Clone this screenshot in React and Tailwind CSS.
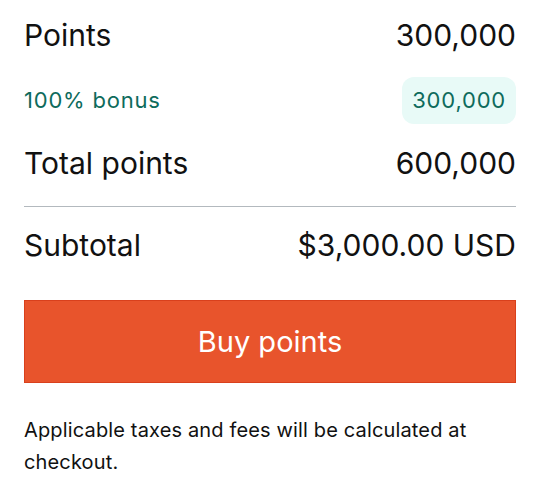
import React from 'react';

const Row = ({ label, value, className = '' }) => (
    <div className={`flex items-center justify-between h-12 text-[30px] text-[#111111] ${className}`}>
        <span>{label}</span>
        <span>{value}</span>
    </div>
);

const App = () => {
    return (
        <div className="min-h-screen bg-white px-6 pt-[11px] w-[540px]" style={{ fontFamily: 'Inter, "Noto Sans", sans-serif' }}>
            <Row label="Points" value="300,000" />

            <div className="mt-[18px] flex items-center justify-between h-[47px] text-[22px] tracking-[0.8px] text-[#0e6b5c]">
                <span>100% bonus</span>
                <span className="h-full flex items-center px-[10px] rounded-xl bg-[#e8faf7]">300,000</span>
            </div>

            <Row label="Total points" value="600,000" className="mt-[15px]" />

            <div className="mt-[19px] h-px bg-[#b3b9be]" />

            <Row label="Subtotal" value="$3,000.00 USD" className="mt-[14px]" />

            <button className="mt-[31px] w-full h-[83px] bg-[#e8542c] border border-[#d9401c] text-white text-[29px] flex items-center justify-center">
                Buy points
            </button>

            <p className="mt-[31px] text-[20px] leading-8 tracking-[0.15px] text-[#111111]">
                Applicable taxes and fees will be calculated at checkout.
            </p>
        </div>
    );
};

export default App;
